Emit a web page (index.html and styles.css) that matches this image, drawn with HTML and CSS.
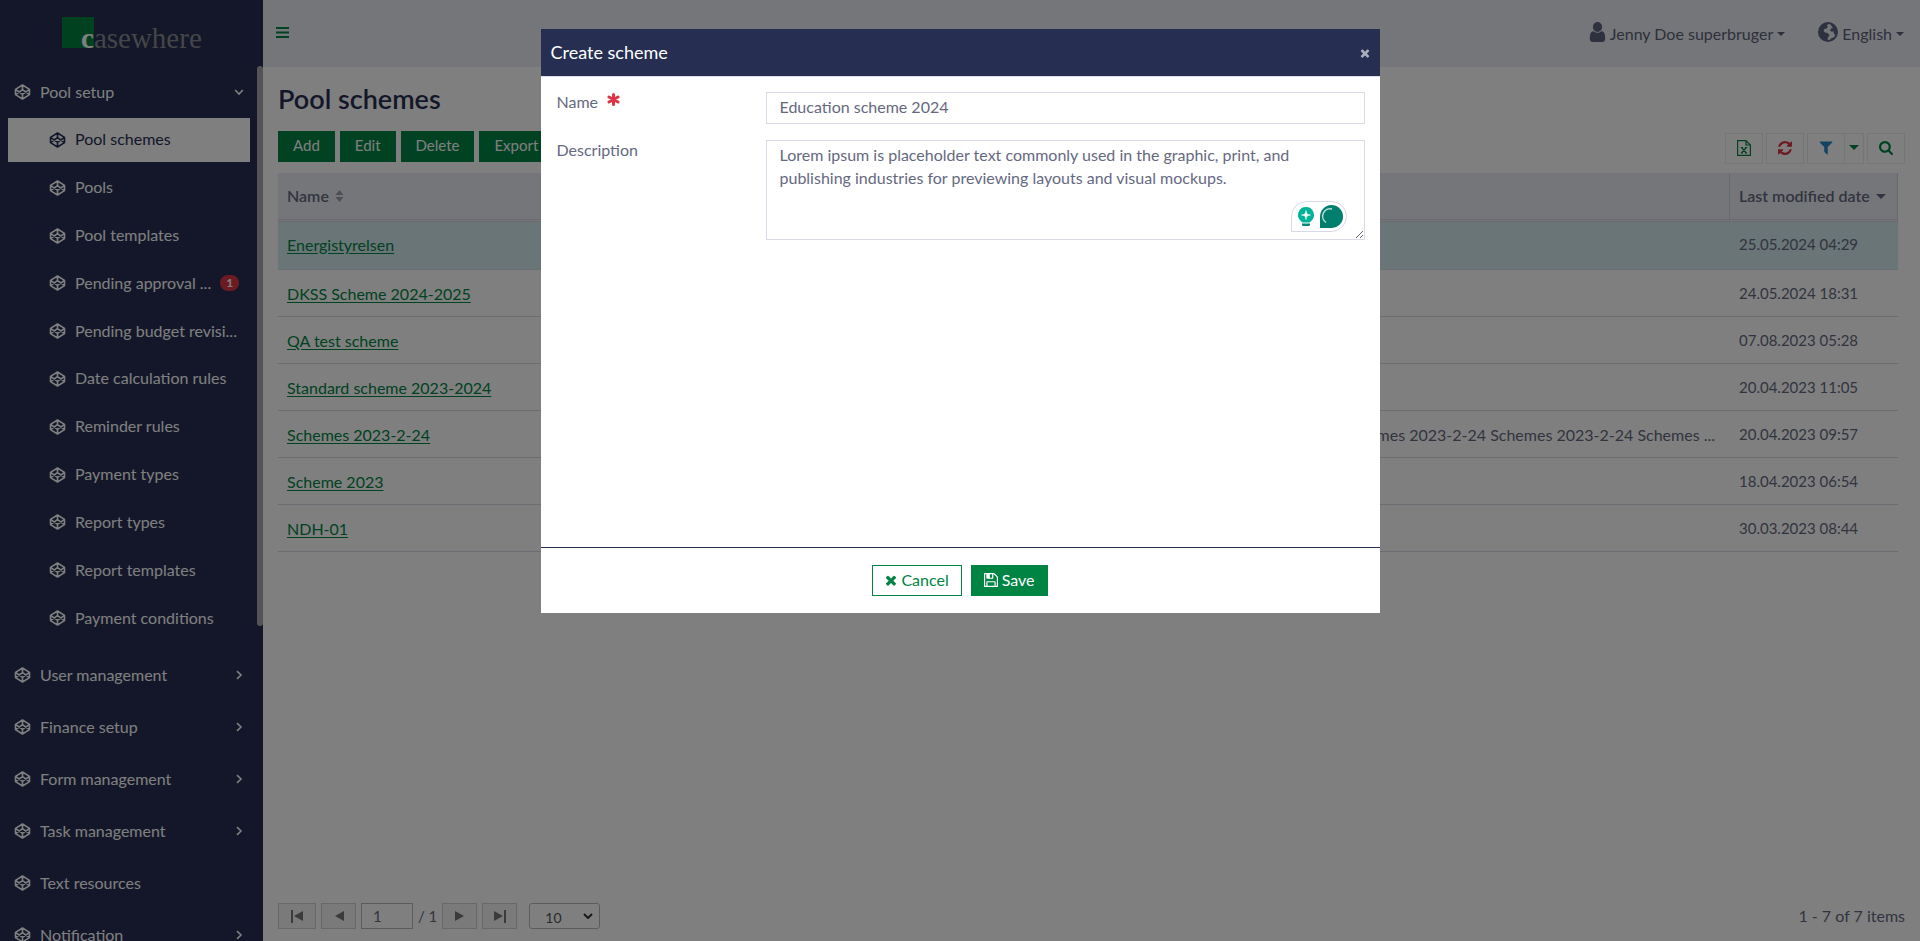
FILE: index.html
```html
<!DOCTYPE html>
<html lang="en">
<head>
<meta charset="utf-8">
<title>Pool schemes</title>
<link rel="stylesheet" href="styles.css">
</head>
<body>
<svg class="sprite" aria-hidden="true">
  <symbol id="cube" viewBox="0 0 16 16"><path d="M8 1 15 5.4V10.6L8 15 1 10.6V5.4ZM8 1V5.6M8 15V10.4M1 5.4 8 10.4 15 5.4M1 10.6 8 5.6 15 10.6" fill="none" stroke="currentColor" stroke-width="1.6" stroke-linejoin="round"/></symbol>
  <symbol id="right" viewBox="0 0 10 10"><path d="M3 1.2 7 5 3 8.8" fill="none" stroke="currentColor" stroke-width="1.6"/></symbol>
  <symbol id="down" viewBox="0 0 10 10"><path d="M1.2 3 5 7 8.8 3" fill="none" stroke="currentColor" stroke-width="1.6"/></symbol>
  <symbol id="caret" viewBox="0 0 8 4"><path d="M0 0H8L4 4Z" fill="currentColor"/></symbol>
  <symbol id="times" viewBox="190 170 1412 1412"><path fill="currentColor" d="M1490 1322q0 40-28 68l-136 136q-28 28-68 28t-68-28l-294-294-294 294q-28 28-68 28t-68-28l-136-136q-28-28-28-68t28-68l294-294-294-294q-28-28-28-68t28-68l136-136q28-28 68-28t68 28l294 294 294-294q28-28 68-28t68 28l136 136q28 28 28 68t-28 68l-294 294 294 294q28 28 28 68z"/></symbol>
</svg>

<div class="app">
  <aside class="sidebar">
    <div class="brand"><span class="brand-mark"></span><span class="brand-name"><b>c</b>asewhere</span></div>
    <nav class="menu">
      <a class="item" href="#"><svg class="cube"><use href="#cube"/></svg><span class="label">Pool setup</span><svg class="chev"><use href="#down"/></svg></a>
      <div class="submenu">
        <a class="sub active" href="#"><svg class="cube"><use href="#cube"/></svg><span class="label">Pool schemes</span></a>
        <a class="sub" href="#"><svg class="cube"><use href="#cube"/></svg><span class="label">Pools</span></a>
        <a class="sub" href="#"><svg class="cube"><use href="#cube"/></svg><span class="label">Pool templates</span></a>
        <a class="sub" href="#"><svg class="cube"><use href="#cube"/></svg><span class="label">Pending approval ...</span><span class="badge">1</span></a>
        <a class="sub" href="#"><svg class="cube"><use href="#cube"/></svg><span class="label">Pending budget revisi...</span></a>
        <a class="sub" href="#"><svg class="cube"><use href="#cube"/></svg><span class="label">Date calculation rules</span></a>
        <a class="sub" href="#"><svg class="cube"><use href="#cube"/></svg><span class="label">Reminder rules</span></a>
        <a class="sub" href="#"><svg class="cube"><use href="#cube"/></svg><span class="label">Payment types</span></a>
        <a class="sub" href="#"><svg class="cube"><use href="#cube"/></svg><span class="label">Report types</span></a>
        <a class="sub" href="#"><svg class="cube"><use href="#cube"/></svg><span class="label">Report templates</span></a>
        <a class="sub" href="#"><svg class="cube"><use href="#cube"/></svg><span class="label">Payment conditions</span></a>
      </div>
      <a class="item" href="#"><svg class="cube"><use href="#cube"/></svg><span class="label">User management</span><svg class="chev"><use href="#right"/></svg></a>
      <a class="item" href="#"><svg class="cube"><use href="#cube"/></svg><span class="label">Finance setup</span><svg class="chev"><use href="#right"/></svg></a>
      <a class="item" href="#"><svg class="cube"><use href="#cube"/></svg><span class="label">Form management</span><svg class="chev"><use href="#right"/></svg></a>
      <a class="item" href="#"><svg class="cube"><use href="#cube"/></svg><span class="label">Task management</span><svg class="chev"><use href="#right"/></svg></a>
      <a class="item" href="#"><svg class="cube"><use href="#cube"/></svg><span class="label">Text resources</span></a>
      <a class="item" href="#"><svg class="cube"><use href="#cube"/></svg><span class="label">Notification</span><svg class="chev"><use href="#right"/></svg></a>
      <span class="thumb"></span>
    </nav>
  </aside>

  <div class="content">
    <header class="topbar">
      <button class="plain burger" aria-label="Toggle menu"><svg viewBox="0 0 13 11"><path d="M0 0H13V2H0ZM0 4.500H13V6.500H0ZM0 9H13V11H0Z" fill="currentColor"/></svg></button>
      <div class="account">
        <button class="plain drop"><svg class="user" viewBox="192 128 1408 1536" preserveAspectRatio="none"><path fill="currentColor" d="M1536 1399q0 109-62.500 187t-150.500 78h-854q-88 0-150.500-78t-62.500-187q0-85 8.500-160.500t31.500-152 58.500-131 94-89 134.500-34.500q131 128 313 128t313-128q76 0 134.500 34.500t94 89 58.500 131 31.500 152 8.500 160.500zm-256-887q0 159-112.500 271.500t-271.500 112.500-271.500-112.500-112.500-271.500 112.500-271.500 271.500-112.500 271.500 112.500 112.500 271.500z"/></svg><span>Jenny Doe superbruger</span><svg class="caret"><use href="#caret"/></svg></button>
        <button class="plain drop"><svg class="globe" viewBox="0 0 20 20"><circle cx="10" cy="10" r="9" fill="none" stroke="currentColor" stroke-width="2"/><path fill="currentColor" d="M1.500 7 4 2.500 8 1 10.500 2 8.500 3.500 10 4.500 8.500 6.500 6.500 7 5.500 9 7 10.500 9.500 11 11.500 13 10 15.500 9.500 18.800 6 18.500 2 14ZM12 1.500 16 3 18.500 7 19 11 17.500 13 16 12 15.500 9.500 13 9.500 12 8 13 6.500 15 6 13.500 4ZM12 17 15 15.500 16 16 13 18.500Z"/></svg><span>English</span><svg class="caret"><use href="#caret"/></svg></button>
      </div>
    </header>
    <main class="page">
      <h1>Pool schemes</h1>
      <div class="toolbar">
        <div class="actions">
          <button class="btn">Add</button><button class="btn">Edit</button><button class="btn">Delete</button><button class="btn">Export</button>
        </div>
        <div class="tools">
          <button class="tool green" aria-label="Export to Excel"><svg class="sheet" viewBox="0 0 14 16"><path d="M.6.6H9L13.400 5V15.400H.6ZM9 .6V5H13.400" fill="none" stroke="currentColor" stroke-width="1.200"/><path d="M4.500 7.500 9.300 13M9.300 7.500 4.500 13M3.700 7.500H6M7.900 7.500H10.200M3.700 13H6M7.900 13H10.200" fill="none" stroke="currentColor" stroke-width="1.200"/></svg></button>
          <button class="tool red" aria-label="Refresh"><svg viewBox="128 128 1536 1536"><path fill="currentColor" d="M1639 1056q0 5-1 7-64 268-268 434.500t-478 166.500q-146 0-282.500-55t-243.500-157l-129 129q-19 19-45 19t-45-19-19-45v-448q0-26 19-45t45-19h448q26 0 45 19t19 45-19 45l-137 137q71 66 161 102t187 36q134 0 250-65t186-179q11-17 53-117 8-23 30-23h192q13 0 22.500 9.500t9.500 22.500zm25-800v448q0 26-19 45t-45 19h-448q-26 0-45-19t-19-45 19-45l138-138q-148-137-349-137-134 0-250 65t-186 179q-11 17-53 117-8 23-30 23h-199q-13 0-22.500-9.500t-9.500-22.500v-7q65-268 270-434.500t480-166.500q146 0 284 55.500t245 156.500l130-129q19-19 45-19t45 19 19 45z"/></svg></button>
          <div class="split"><button class="tool blue" aria-label="Filter"><svg viewBox="128 192 1536 1536"><path fill="currentColor" d="M1595 295q17 41-14 70l-493 493v742q0 42-39 59-13 5-25 5-27 0-45-19l-256-256q-19-19-19-45v-486l-493-493q-31-29-14-70 17-39 59-39h1280q42 0 59 39z"/></svg></button><button class="tool narrow green" aria-label="Filter options"><svg class="caret"><use href="#caret"/></svg></button></div>
          <button class="tool green" aria-label="Search"><svg viewBox="64 128 1664 1664"><path fill="currentColor" d="M1216 832q0-185-131.500-316.500t-316.500-131.500-316.500 131.500-131.500 316.500 131.500 316.500 316.500 131.500 316.500-131.500 131.500-316.500zm512 832q0 52-38 90t-90 38q-54 0-90-38l-343-342q-179 124-399 124-143 0-273.500-55.500t-225-150-150-225-55.500-273.500 55.500-273.500 150-225 225-150 273.500-55.500 273.500 55.500 225 150 150 225 55.500 273.500q0 220-124 399l343 343q37 37 37 90z"/></svg></button>
        </div>
      </div>
      <div class="grid">
        <table>
          <colgroup><col class="c-name"><col><col class="c-date"></colgroup>
          <thead><tr><th>Name <svg class="sort" viewBox="0 0 8 12"><path d="M0 5H8L4 0ZM0 7H8L4 12Z" fill="currentColor"/></svg></th><th>Description</th><th>Last modified date <svg class="caret"><use href="#caret"/></svg></th></tr></thead>
          <tbody>
            <tr class="selected"><td><a href="#">Energistyrelsen</a></td><td></td><td>25.05.2024 04:29</td></tr>
            <tr><td><a href="#">DKSS Scheme 2024-2025</a></td><td></td><td>24.05.2024 18:31</td></tr>
            <tr><td><a href="#">QA test scheme</a></td><td></td><td>07.08.2023 05:28</td></tr>
            <tr><td><a href="#">Standard scheme 2023-2024</a></td><td></td><td>20.04.2023 11:05</td></tr>
            <tr><td><a href="#">Schemes 2023-2-24</a></td><td class="desc">Schemes 2023-2-24 Schemes 2023-2-24 Schemes ...</td><td>20.04.2023 09:57</td></tr>
            <tr><td><a href="#">Scheme 2023</a></td><td></td><td>18.04.2023 06:54</td></tr>
            <tr><td><a href="#">NDH-01</a></td><td></td><td>30.03.2023 08:44</td></tr>
          </tbody>
        </table>
      </div>
      <footer class="pager">
        <button class="page-btn" aria-label="First page"><svg viewBox="0 0 14 14"><path d="M1 1H3V14H1ZM13 2V12L4 7Z" fill="currentColor"/></svg></button>
        <button class="page-btn" aria-label="Previous page"><svg viewBox="0 0 14 14"><path d="M12 2V12L3 7Z" fill="currentColor"/></svg></button>
        <input class="page-no" aria-label="Page" value="1"><span class="of">/ 1</span>
        <button class="page-btn" aria-label="Next page"><svg viewBox="0 0 14 14"><path d="M2 2V12L11 7Z" fill="currentColor"/></svg></button>
        <button class="page-btn" aria-label="Last page"><svg viewBox="0 0 14 14"><path d="M11 1H13V14H11ZM1 2V12L10 7Z" fill="currentColor"/></svg></button>
        <span class="size"><select aria-label="Items per page"><option>10</option></select><svg viewBox="0 0 10 6"><path d="M1 1 5 5 9 1" fill="none" stroke="currentColor" stroke-width="2"/></svg></span>
        <span class="total">1 - 7 of 7 items</span>
      </footer>
    </main>
  </div>
</div>

<div class="backdrop">
  <form class="dialog" role="dialog" aria-labelledby="dialog-title">
    <header class="dialog-head"><h2 id="dialog-title">Create scheme</h2><button type="button" class="plain close" aria-label="Close"><svg><use href="#times"/></svg></button></header>
    <div class="fields">
      <label for="name">Name <svg class="req" viewBox="0 0 13 13"><path d="M6.500 1.500V11.500M2 4 11 9M11 4 2 9" stroke="currentColor" stroke-width="3" stroke-linecap="round"/></svg></label>
      <input id="name" value="Education scheme 2024">
      <label for="description">Description</label>
      <div class="area">
        <textarea id="description" spellcheck="false">Lorem ipsum is placeholder text commonly used in the graphic, print, and
publishing industries for previewing layouts and visual mockups.</textarea>
        <svg class="assist" viewBox="0 0 56 31"><path d="M.5 30.500V15.500A15 15 0 0 1 15.500.5H40.500A15 15 0 0 1 40.500 30.500Z" fill="#fff" stroke="#d6d9e6"/><path d="M15 6a8 8 0 0 0-5 14.200L11.500 21.500H18.500L20 20.200A8 8 0 0 0 15 6Z" fill="#00b398"/><path d="M11 22.500H19V24A1.500 1.500 0 0 1 17.500 25H12.500A1.500 1.500 0 0 1 11 24Z" fill="#018673"/><path d="M15 9.500C15.500 12.500 16 13.500 19.500 14 16 14.500 15.500 15.500 15 18.500 14.500 15.500 14 14.500 10.500 14 14 13.500 14.500 12.500 15 9.500Z" fill="#fff" stroke="#fff" stroke-width=".6"/><path d="M29 27V15.500A11.500 11.500 0 1 1 41 27Z" fill="#027e6f"/><path d="M35 21.500A7.500 7.500 0 0 1 41 8" fill="none" stroke="#b9e0da" stroke-width="1.500"/></svg>
      </div>
    </div>
    <footer class="dialog-foot">
      <button type="button" class="btn outline"><svg><use href="#times"/></svg>Cancel</button>
      <button type="button" class="btn save"><svg viewBox="128 128 1536 1536"><path fill="currentColor" d="M512 1536h768v-384h-768v384zm896 0h128v-896q0-14-10-38.500t-20-34.500l-281-281q-10-10-34-20t-39-10v416q0 40-28 68t-68 28h-576q-40 0-68-28t-28-68v-416h-128v1280h128v-416q0-40 28-68t68-28h832q40 0 68 28t28 68v416zm-384-928v-320q0-13-9.500-22.500t-22.500-9.500h-192q-13 0-22.500 9.500t-9.500 22.500v320q0 13 9.500 22.500t22.500 9.500h192q13 0 22.500-9.500t9.500-22.500zm640 32v928q0 40-28 68t-68 28h-1344q-40 0-68-28t-28-68v-1344q0-40 28-68t68-28h928q40 0 88 20t76 48l280 280q28 28 48 76t20 88z"/></svg>Save</button>
    </footer>
  </form>
</div>
</body>
</html>
```
FILE: styles.css
```css
* { box-sizing: border-box; }
body { margin: 0; font: 16px/23px Lato, "Liberation Sans", sans-serif; color: #65697f; background: #fff; }
button, input, select, textarea { font: inherit; color: inherit; margin: 0; }
svg { flex: none; }
.sprite { display: none; }
.plain { background: none; border: 0; padding: 0; }
.app { display: flex; height: 100vh; overflow: hidden; }

.sidebar { flex: none; width: 263px; background: #262e52; color: #fff; display: flex; flex-direction: column; }
.brand { display: flex; height: 66px; flex: none; padding: 17px 0 0 62px; }
.brand-mark { width: 32px; height: 31px; background: #00843f; }
.brand-name { margin-left: -13px; font: 29px/42px "Liberation Serif", serif; color: #8b8c90; }
.brand-name b { color: #fff; }
.menu { position: relative; flex: 1; min-height: 0; overflow: hidden; }
.thumb { position: absolute; top: 0; right: 0; width: 6px; height: 64%; border-radius: 3px; background: #a9a9a9; }
.item, .sub { display: flex; align-items: center; color: inherit; text-decoration: none; }
.item { height: 52px; padding: 0 19px 0 14px; gap: 9px; }
.submenu { display: grid; grid-auto-rows: 1fr; row-gap: 4px; height: 531px; padding: 0 15px 9px 8px; }
.sub { padding: 0 11px 0 41px; gap: 9px; }
.active { background: #fff; color: #262e52; }
.cube { width: 17px; height: 16px; }
.label { flex: 1; white-space: nowrap; padding-bottom: 2px; }
.chev { width: 10px; height: 10px; }
.badge { background: #dc3545; border-radius: 8px; padding: 0 6px; font: bold 12px/16px Lato, sans-serif; }

.content { flex: 1; min-width: 0; display: flex; flex-direction: column; }
.topbar { height: 67px; flex: none; background: #ebedf4; display: flex; justify-content: space-between; padding: 0 16px 0 13px; color: #5d6178; }
.burger { color: #008444; width: 13px; padding-bottom: 2px; }
.burger svg { width: 13px; height: 11px; display: block; }
.account { display: flex; gap: 33px; }
.drop { display: flex; align-items: center; gap: 4px; }
.user { width: 17px; height: 20px; margin-bottom: 3px; color: #5d6580; }
.globe { width: 20px; height: 20px; margin-bottom: 3px; color: #5d6580; }
.caret { width: 8px; height: 4px; }
.page { flex: 1; min-height: 0; display: flex; flex-direction: column; padding: 16px 15px 12px; }
h1 { margin: 0 0 16px; font-size: 27px; line-height: 32px; font-weight: 600; color: #262e52; }
.toolbar { display: flex; justify-content: space-between; height: 42px; }
.actions { display: flex; gap: 5px; align-items: flex-start; }
.btn { height: 31px; padding: 0 14px 2px; border: 1px solid #008444; background: #008444; color: #fff; display: flex; align-items: center; gap: 4px; }
.actions .btn { font-size: 15px; }
.tools { display: flex; gap: 3px; padding-top: 2px; align-items: flex-start; }
.tool { width: 38px; height: 31px; padding: 0 0 2px; border: 1px solid #ebedf4; background: none; display: flex; align-items: center; justify-content: center; }
.tool svg { width: 14px; height: 14px; }
.tool .sheet { height: 16px; }
.tool .caret { width: 10px; height: 5px; }
.split { display: flex; }
.narrow { width: 19px; border-left: 0; }
.green { color: #008444; } .red { color: #dc3545; } .blue { color: #2289c7; }

.grid { flex: 1; }
table { width: calc(100% - 7px); border-collapse: separate; border-spacing: 0; table-layout: fixed; }
.c-name { width: 780px; } .c-date { width: 169px; }
th { height: 49px; padding: 0 9px 2px; text-align: left; font-weight: 600; background: #ebedf4; border-bottom: 3px double #d4d5e0; white-space: nowrap; }
th:last-child { border-left: 1px solid #d0d2dc; border-right: 1px solid #d0d2dc; }
.sort { width: 9px; height: 12px; margin-left: 2px; color: #9b9eab; }
th .caret { width: 10px; height: 5px; margin: 0 0 3px 2px; }
td { height: 47px; padding: 0 9px; border-bottom: 1px solid #d9dbe4; white-space: nowrap; }
td:last-child { padding-left: 10px; font-size: 15px; }
td a { color: #008444; text-underline-offset: 2px; }
.selected td { background: #d3eaec; height: 48px; padding-bottom: 3px; }
.desc { text-align: right; padding-right: 14px; overflow: hidden; }

.pager { display: flex; align-items: center; gap: 5px; height: 26px; }
.page-btn { width: 35px; height: 26px; padding: 0; border: 1px solid #d0d0d0; background: #f4f4f4; color: #777; display: flex; align-items: center; justify-content: center; }
.page-btn:first-child { width: 38px; }
.page-btn svg { width: 14px; height: 14px; }
.page-no { width: 52px; height: 26px; padding: 0 11px; border: 1px solid #b8b8b8; font-size: 15px; }
.of { font-size: 15px; }
.size { display: flex; align-items: center; margin-left: 7px; width: 71px; height: 26px; border: 1px solid #b8b8b8; border-radius: 3px; padding-right: 6px; color: #555; font-size: 14px; }
.size select { appearance: none; flex: 1; min-width: 0; border: 0; background: none; padding: 3px 0 0 15px; }
.size svg { width: 10px; height: 6px; color: #333; }
.total { margin-left: auto; padding-bottom: 2px; }

.backdrop { position: fixed; inset: 0; background: rgba(0, 0, 0, .5); display: flex; align-items: flex-start; justify-content: center; padding-top: 29px; }
.dialog { width: 839px; max-width: 100%; background: #fff; }
.dialog-head { display: flex; align-items: center; justify-content: space-between; height: 47px; padding: 0 10px; background: #262e52; color: #fff; }
h2 { margin: 0; font-size: 18px; line-height: 24px; font-weight: 400; padding-bottom: 1px; }
.close { color: #a8acbd; height: 10px; }
.close svg { width: 10px; height: 10px; display: block; }
.fields { display: grid; grid-template-columns: 209px 1fr; row-gap: 16px; padding: 15px 15px 0 16px; height: 472px; align-content: start; border-top: 1px solid #dfe1ea; border-bottom: 1px solid #262e52; }
label { line-height: 20px; }
.req { width: 13px; height: 13px; margin: 0 0 2px 5px; color: #dc3545; }
.fields input { height: 32px; }
.fields input, textarea { display: block; width: 100%; border: 1px solid #d9dbe8; padding: 2px 13px 5px; outline: 0; background: #fff; }
textarea { height: 100px; resize: vertical; }
.area { position: relative; }
.assist { position: absolute; right: 18px; bottom: 8px; width: 56px; height: 31px; }
.dialog-foot { display: flex; justify-content: center; gap: 9px; padding: 17px 0; }
.dialog-foot .btn { padding: 0 12px 2px; }
.save svg { width: 14px; height: 14px; }
.outline svg { width: 12px; height: 12px; }
.dialog-foot .outline { background: #fff; color: #008444; }
```
